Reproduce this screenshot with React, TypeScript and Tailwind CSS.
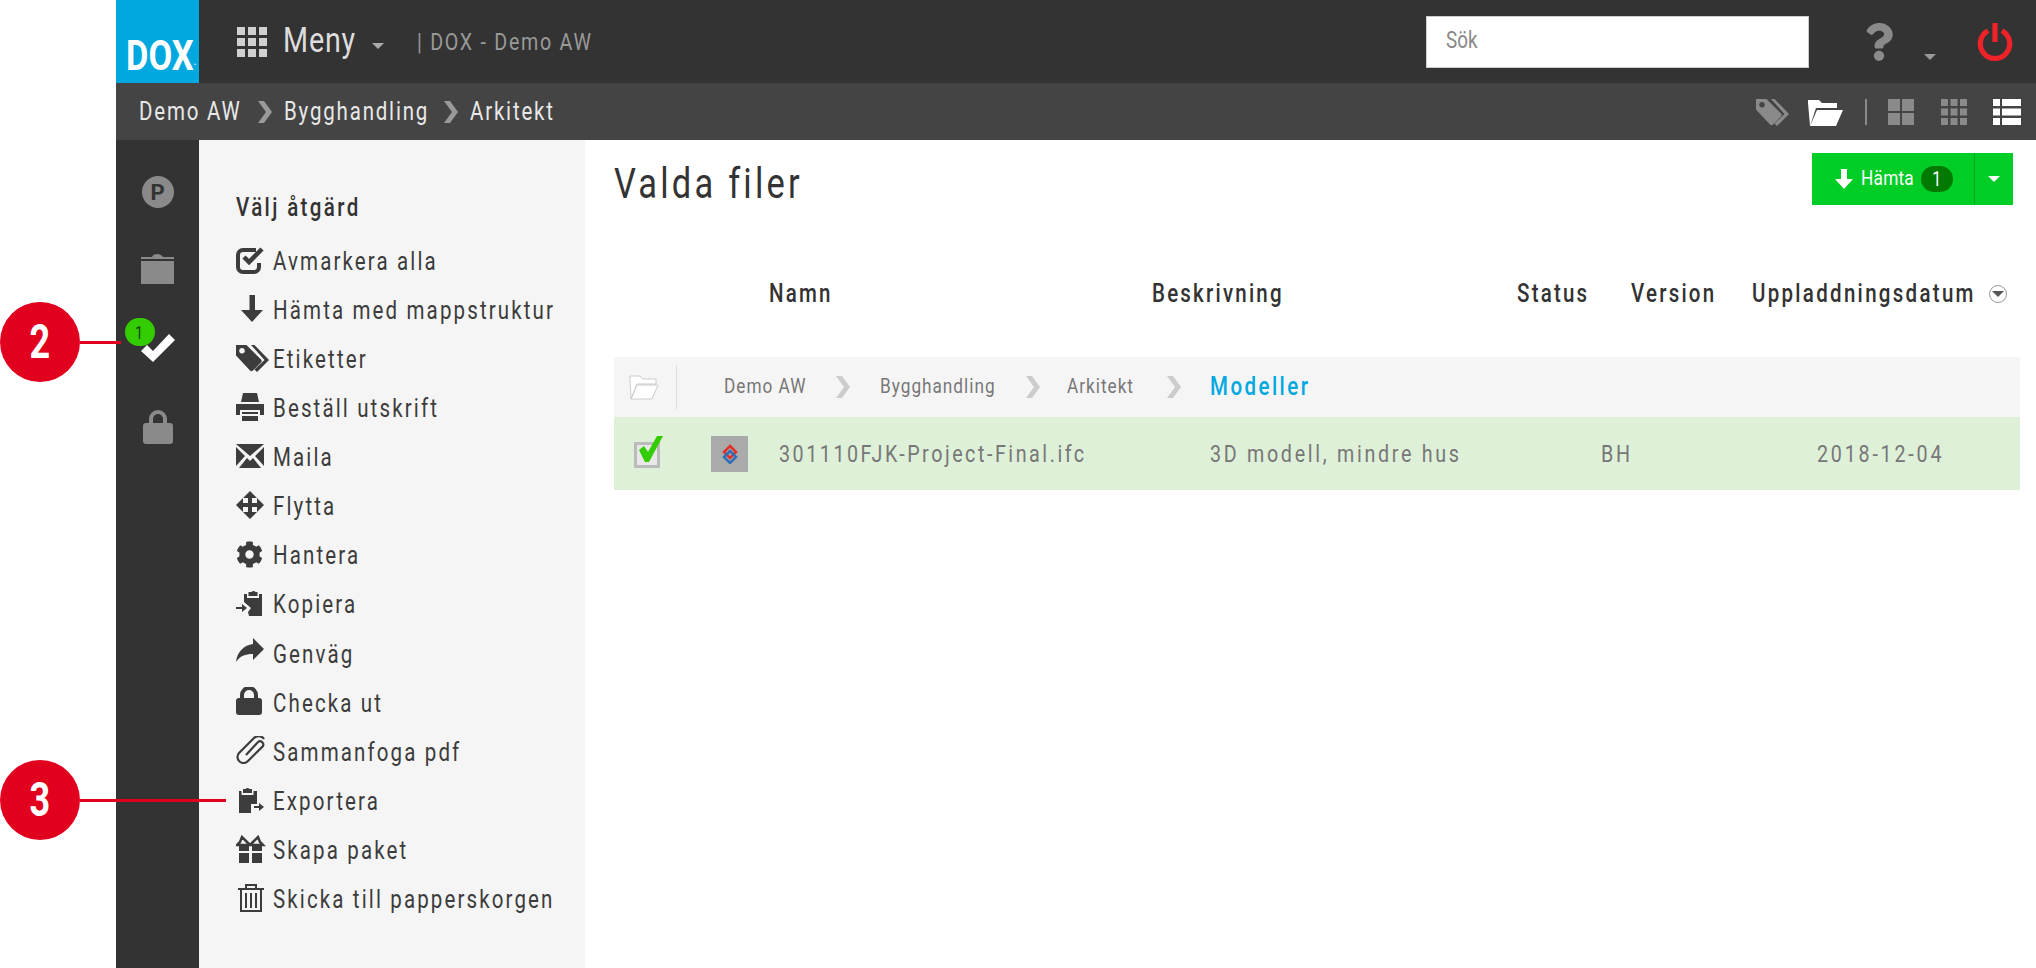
import type { ReactNode } from "react";
import { FaCog, FaQuestion } from "react-icons/fa";

// No condensed family is installed, so Roboto gets squeezed sideways to look like the DIN in the reference.
function Txt({ children, className = "" }: { children: ReactNode; className?: string }) {
  return <span className={"inline-block origin-left scale-x-[0.82] whitespace-nowrap " + className}>{children}</span>;
}

function Glyph({ children, w = 34, h = 28, className = "fill-[#3c3c3c]" }: { children: ReactNode; w?: number; h?: number; className?: string }) {
  return (
    <svg viewBox={`0 0 ${w} ${h}`} width={w} height={h} className={"shrink-0 " + className}>
      {children}
    </svg>
  );
}

const TAG_D = "M0 1h10.500L25 15.500q1.500 1.500 0 3L17 26.500q-1.500 1.500-3 0L0 11.500zM6 4a2.800 2.800 0 1 0 .01 0zM15 1h3.500L33 16 21 28l-2.500-2.500L28.500 16z";

function Chevron({ className }: { className: string }) {
  return (
    <svg viewBox="0 0 14 22" width={14} height={22} className={"shrink-0 " + className}>
      <path d="M0 0h6l8 11-8 11H0l8-11z" />
    </svg>
  );
}

function Caret({ className }: { className: string }) {
  return <span className={"inline-block border-x-[6px] border-t-[6px] border-x-transparent " + className} />;
}

const ACTIONS: { label: string; icon: ReactNode }[] = [
  {
    label: "Avmarkera alla",
    icon: (
      <Glyph>
        <path d="M23 17v4a5 5 0 0 1-5 5H7a5 5 0 0 1-5-5V9a5 5 0 0 1 5-5h13" className="fill-none stroke-[#3c3c3c] stroke-[4]" />
        <path d="M8 11l5 5L26 3" className="fill-none stroke-[#3c3c3c] stroke-[4.500]" />
      </Glyph>
    ),
  },
  { label: "Hämta med mappstruktur", icon: <Glyph><path d="M13.500 0h5.500v15h8L16 27 5 15h8.500z" /></Glyph> },
  { label: "Etiketter", icon: <Glyph><path fillRule="evenodd" d={TAG_D} /></Glyph> },
  {
    label: "Beställ utskrift",
    icon: <Glyph><path d="M7 0h14l2 9H5zM0 11h28v11h-4v-5H4v5H0zM6 19h16v2H6zM6 23h16v5H6z" /></Glyph>,
  },
  {
    label: "Maila",
    icon: <Glyph><path d="M0 2h28L14 14zM0 5l9 9-9 10zM28 5v19l-9-10zM3 26l8-10 3 3 3-3 8 10z" /></Glyph>,
  },
  {
    label: "Flytta",
    icon: <Glyph><path d="M14 0l7 7h-5v5h5V7l7 7-7 7v-5h-5v5h5l-7 7-7-7h5v-5H7v5l-7-7 7-7v5h5V7H7z" /></Glyph>,
  },
  { label: "Hantera", icon: <FaCog size={27} className="mr-[10px] shrink-0" /> },
  {
    label: "Kopiera",
    icon: (
      <Glyph>
        <path d="M8 5h3v4h12V5h3v22H13l-1-4 3-4-7-6z" />
        <path d="M12.500 7V3h3a2.500 2.500 0 0 1 4 0h2v4z" />
        <path d="M0 18h6v-3l5 4-5 4v-3H0z" />
      </Glyph>
    ),
  },
  { label: "Genväg", icon: <Glyph><path d="M17 0l11 11-11 11v-6C9 16 4 18 0 24 1 14 8 7 17 6z" /></Glyph> },
  {
    label: "Checka ut",
    icon: (
      <Glyph>
        <path d="M6 12V8a7 7 0 0 1 14 0v4" className="fill-none stroke-[#3c3c3c] stroke-[4]" />
        <rect y="11" width="26" height="17" rx="3" />
      </Glyph>
    ),
  },
  {
    label: "Sammanfoga pdf",
    icon: (
      <Glyph>
        <path d="M10 19L22 6a3.300 3.300 0 0 1 5 4L12 25a6 6 0 0 1-9-8L18 2a6.500 6.500 0 0 1 10 1" className="fill-none stroke-[#3c3c3c] stroke-[2.200]" />
      </Glyph>
    ),
  },
  {
    label: "Exportera",
    icon: (
      <Glyph>
        <path d="M3 5h2.500v4h12V5H21v13h-6v9H3z" />
        <path d="M7 7V3h2.500a2.500 2.500 0 0 1 4 0H16v4z" />
        <path d="M18 20h5v-3l5 4-5 4v-3h-5z" />
      </Glyph>
    ),
  },
  {
    label: "Skapa paket",
    icon: (
      <Glyph>
        <path d="M14 10L6 2 4 7l-3 3zM14 10l8-8 2 5 3 3z" className="fill-none stroke-[#3c3c3c] stroke-[2.500]" />
        <path d="M3 11h10v5H3zM16 11h10v5H16zM3 18h10v10H3zM16 18h10v10H16z" />
      </Glyph>
    ),
  },
  {
    label: "Skicka till papperskorgen",
    icon: (
      <Glyph>
        <path d="M2 5h26M10 5V1h10v4M5 5v22h20V5M10 9v15M15 9v15M20 9v15" className="fill-none stroke-[#3c3c3c] stroke-2" />
      </Glyph>
    ),
  },
];

function Callout({ n, className, lineClass }: { n: number; className: string; lineClass: string }) {
  return (
    <div className={"absolute left-0 flex items-center " + className}>
      <div className="flex h-[80px] w-[80px] items-center justify-center rounded-full bg-[#e2001f]">
        <span className="scale-x-[0.75] text-[48px] font-bold text-white">{n}</span>
      </div>
      <div className={"h-[3px] bg-[#e2001f] " + lineClass} />
    </div>
  );
}

export default function App() {
  return (
    <div className="relative flex h-[968px] w-[2036px] bg-white font-['Roboto',sans-serif] text-[#333]">
      <div className="w-[116px] shrink-0" />
      <div className="flex min-w-0 flex-1 flex-col">
        <header className="flex h-[83px] shrink-0 items-center bg-[#333] pr-[23px]">
          <div className="flex h-full w-[83px] shrink-0 items-end overflow-hidden bg-[#00a8e0] pb-[6px] pl-[10px] text-[42px] leading-none font-bold text-white">
            <Txt className="scale-x-[0.74]">
              DOX<span className="text-[14px] font-normal">·</span>
            </Txt>
          </div>
          <svg viewBox="0 0 30 30" width={30} height={30} className="ml-[38px] shrink-0 fill-[#d0d0d0]">
            <path d="M0 0h8v8H0zM11 0h8v8h-8zM22 0h8v8h-8zM0 11h8v8H0zM11 11h8v8h-8zM22 11h8v8h-8zM0 22h8v8H0zM11 22h8v8h-8zM22 22h8v8h-8z" />
          </svg>
          <span className="ml-[16px] w-[89px] text-[35px] text-[#ddd]">
            <Txt className="tracking-[1px]">Meny</Txt>
          </span>
          <Caret className="mt-[8px] border-t-[#aaa]" />
          <span className="ml-[33px] text-[24px] text-[#999]">
            <Txt className="tracking-[2.100px]">| DOX - Demo AW</Txt>
          </span>
          <div className="mr-[51px] ml-auto flex h-[52px] w-[383px] items-center border border-[#ccc] bg-white px-[19px] text-[23px] text-[#888]">
            <Txt>Sök</Txt>
          </div>
          <FaQuestion size={38} className="shrink-0 text-[#8a8a8a]" />
          <Caret className="mt-[30px] ml-[26px] border-t-[#999]" />
          <svg viewBox="0 0 40 44" width={36} height={38} className="ml-[41px] shrink-0 fill-none stroke-[#ee2229] stroke-[6]">
            <path d="M12 9a17 17 0 1 0 16 0" />
            <path d="M20 0v22" />
          </svg>
        </header>
        <div className="flex h-[57px] shrink-0 items-center bg-[#444] pr-[15px] pl-[23px] text-[25px] text-[#e8e8e8]">
          <span className="w-[119px]"><Txt className="tracking-[2.200px]">Demo AW</Txt></span>
          <Chevron className="mr-[12px] fill-[#9a9a9a]" />
          <span className="w-[160px]"><Txt className="tracking-[2.200px]">Bygghandling</Txt></span>
          <Chevron className="mr-[12px] fill-[#9a9a9a]" />
          <Txt className="tracking-[2.200px]">Arkitekt</Txt>
          <div className="ml-auto flex items-center">
            <Glyph className="fill-[#8a8a8a]"><path fillRule="evenodd" d={TAG_D} /></Glyph>
            <Glyph w={35} h={28} className="ml-[18px] fill-white">
              <path d="M2 28L0 5V2h11l3 3h15v5H8zM9 12h26l-7 16H2z" />
            </Glyph>
            <div className="mr-[21px] ml-[22px] h-[26px] w-[2px] bg-[#8a8a8a]" />
            <Glyph w={26} h={26} className="fill-[#8a8a8a]">
              <path d="M0 0h12v12H0zM14 0h12v12H14zM0 14h12v12H0zM14 14h12v12H14z" />
            </Glyph>
            <Glyph w={26} h={26} className="ml-[27px] fill-[#8a8a8a]">
              <path d="M0 0h7v7H0zM9.500 0h7v7h-7zM19 0h7v7h-7zM0 9.500h7v7H0zM9.500 9.500h7v7h-7zM19 9.500h7v7h-7zM0 19h7v7H0zM9.500 19h7v7h-7zM19 19h7v7h-7z" />
            </Glyph>
            <Glyph w={28} h={26} className="ml-[26px] fill-white">
              <path d="M0 0h7v7H0zM9 0h19v7H9zM0 9.500h7v7H0zM9 9.500h19v7H9zM0 19h7v7H0zM9 19h19v7H9z" />
            </Glyph>
          </div>
        </div>
        <div className="flex min-h-0 flex-1">
          <aside className="flex w-[83px] shrink-0 flex-col items-center bg-[#333] pt-[36px]">
            <div className="flex h-[32px] w-[32px] items-center justify-center rounded-full bg-[#8a8a8a] text-[22px] font-bold text-[#333]">
              P
            </div>
            <Glyph w={33} h={30} className="mt-[46px] fill-[#8a8a8a]">
              <path d="M0 3h11q1-3 5-3t6 3h11v2H0zM0 7h33v23H0z" />
            </Glyph>
            <div className="relative mt-[50px] flex h-[28px] w-[34px] items-center justify-center">
              <svg viewBox="0 0 34 28" width={34} height={28} className="fill-white">
                <path d="M0 17l6-6 6 6L28 0l6 6-22 22z" />
              </svg>
              <span className="absolute -top-[16px] -left-[16px] flex h-[28px] w-[30px] items-center justify-center rounded-full bg-[#33cc00] text-[18px] text-[#124400]">
                <span className="scale-x-[0.8]">1</span>
              </span>
            </div>
            <svg viewBox="0 0 30 34" width={30} height={34} className="mt-[48px] fill-[#8a8a8a]">
              <path d="M8 14V9a7 7 0 0 1 14 0v5" className="fill-none stroke-[#8a8a8a] stroke-[4]" />
              <rect y="13" width="30" height="21" rx="3" />
            </svg>
          </aside>
          <nav className="w-[386px] shrink-0 bg-[#f5f5f5] pt-[53px] pl-[37px] text-[#3c3c3c]">
            <h2 className="mb-[14px] h-[30px] text-[25px] leading-[30px] font-medium text-[#333]">
              <Txt className="tracking-[2.900px]">Välj åtgärd</Txt>
            </h2>
            {ACTIONS.map((a) => (
              <div key={a.label} className="flex h-[49.100px] items-center text-[25px]">
                <span className="-mt-[4px] flex w-[37px] shrink-0">{a.icon}</span>
                <Txt className="tracking-[2.600px]">{a.label}</Txt>
              </div>
            ))}
          </nav>
          <main className="min-w-0 flex-1 pr-[16px] pl-[29px]">
            <div className="flex h-[65px] items-start justify-between pt-[13px] pr-[7px]">
              <h1 className="mt-[7px] text-[42px] leading-[48px] text-[#333]">
                <Txt className="tracking-[3.900px]">Valda filer</Txt>
              </h1>
              <div className="flex h-[52px] w-[201px] bg-[#00cd25] text-white">
                <div className="flex flex-1 items-center pl-[23px]">
                  <svg viewBox="0 0 18 20" width={18} height={20} className="shrink-0 fill-white">
                    <path d="M6 0h6v10h6l-9 10-9-10h6z" />
                  </svg>
                  <span className="ml-[8px] w-[60px] text-[21px]"><Txt className="tracking-[0.300px]">Hämta</Txt></span>
                  <span className="flex h-[26px] w-[32px] items-center justify-center rounded-full bg-[#007a00] text-[20px]">
                    <span className="scale-x-[0.8]">1</span>
                  </span>
                </div>
                <div className="flex w-[39px] items-center justify-center border-l border-[#00a820]">
                  <Caret className="border-t-white" />
                </div>
              </div>
            </div>
            <div className="mt-[71px] flex h-[36px] items-center pl-[155px] text-[25px] font-medium text-[#333]">
              <span className="w-[383px]"><Txt className="tracking-[2.700px]">Namn</Txt></span>
              <span className="w-[365px]"><Txt className="tracking-[2.700px]">Beskrivning</Txt></span>
              <span className="w-[114px]"><Txt className="tracking-[2.700px]">Status</Txt></span>
              <span className="w-[121px]"><Txt className="tracking-[2.700px]">Version</Txt></span>
              <span className="w-[237px]"><Txt className="tracking-[2.800px]">Uppladdningsdatum</Txt></span>
              <span className="flex h-[18px] w-[18px] items-center justify-center rounded-full border border-[#999]">
                <Caret className="border-x-[4px] border-t-[5px] border-t-[#555]" />
              </span>
            </div>
            <div className="mt-[45px] flex h-[60px] items-center bg-[#f5f5f5] pl-[15px] text-[21px] text-[#777]">
              <svg viewBox="0 0 30 26" width={30} height={26} className="shrink-0 fill-white stroke-[#ccc]">
                <path d="M2 25L1 4V2h10l3 3h13v5H8zM8 11h21l-6 14H2z" />
              </svg>
              <div className="mr-[47px] ml-[17px] h-[44px] w-px bg-[#ddd]" />
              <span className="w-[112px]"><Txt className="tracking-[1.200px]">Demo AW</Txt></span>
              <Chevron className="mr-[30px] fill-[#ccc]" />
              <span className="w-[146px]"><Txt className="tracking-[1.200px]">Bygghandling</Txt></span>
              <Chevron className="mr-[27px] fill-[#ccc]" />
              <span className="w-[100px]"><Txt className="tracking-[1.200px]">Arkitekt</Txt></span>
              <Chevron className="mr-[29px] fill-[#ccc]" />
              <span className="text-[25px] font-medium text-[#00a8e0]"><Txt className="tracking-[3px]">Modeller</Txt></span>
            </div>
            <div className="flex h-[73px] items-center bg-[#dff0d8] pl-[20px] text-[24px] text-[#777]">
              <span className="relative mt-[3px] h-[26px] w-[26px] border-[3px] border-[#bbb] bg-[#e8e8e8]">
                <svg viewBox="0 0 24 26" width={24} height={26} className="absolute -top-[9px] -right-[6px] fill-[#33cc00]">
                  <path d="M0 14l5-4 4 6L18 0h6L10 26H6z" />
                </svg>
              </span>
              <span className="ml-[51px] flex h-[36px] w-[37px] items-center justify-center bg-[#aaa]">
                <svg viewBox="0 0 20 20" width={20} height={20} className="fill-none stroke-[2.500]">
                  <path d="M10 2l6 6-6 6-6-6z" className="stroke-[#e0302a]" />
                  <path d="M10 7l6 6-6 6-6-6z" className="stroke-[#2d6fb8]" />
                </svg>
              </span>
              <span className="ml-[31px] w-[431px]"><Txt className="tracking-[3.100px]">301110FJK-Project-Final.ifc</Txt></span>
              <span className="w-[391px]"><Txt className="tracking-[3.300px]">3D modell, mindre hus</Txt></span>
              <span className="w-[216px]"><Txt className="tracking-[3.300px]">BH</Txt></span>
              <Txt className="tracking-[3.400px]">2018-12-04</Txt>
            </div>
          </main>
        </div>
      </div>
      <Callout n={2} className="top-[302px]" lineClass="w-[41px]" />
      <Callout n={3} className="top-[760px]" lineClass="w-[146px]" />
    </div>
  );
}
